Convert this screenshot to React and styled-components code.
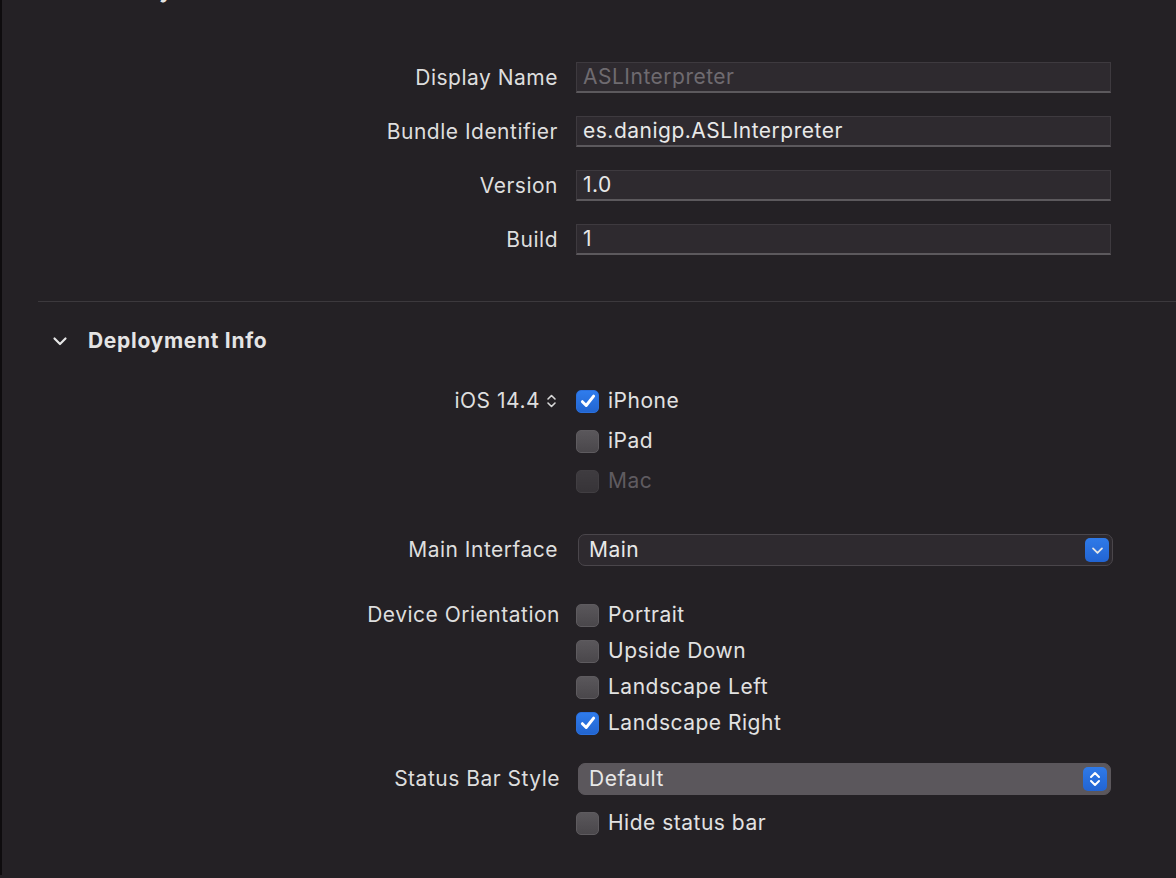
import styled, { createGlobalStyle } from 'styled-components';

const GlobalStyle = createGlobalStyle`
  html, body {
    margin: 0;
    padding: 0;
    background: #242125;
    overflow: hidden;
  }
  body {
    font-family: Inter, "Noto Sans", "Liberation Sans", sans-serif;
    -webkit-font-smoothing: antialiased;
  }
`;

function Chevron({ size = 16 }) {
  return (
    <svg width={size} height={size} viewBox="0 0 16 16" fill="none">
      <path d="M2.5 5.5 L8 11 L13.5 5.5" stroke="#e6e6e6" strokeWidth="2.2" strokeLinecap="round" strokeLinejoin="round" />
    </svg>
  );
}

function Check() {
  return (
    <svg width="18" height="18" viewBox="0 0 16 16" fill="none">
      <path d="M3 8.6 L6.4 12 L13 3.6" stroke="#fff" strokeWidth="2.6" strokeLinecap="round" strokeLinejoin="round" />
    </svg>
  );
}

function Stepper() {
  return (
    <svg width="11" height="16" viewBox="0 0 11 16" fill="none">
      <path d="M2 6 L5.5 2.5 L9 6" stroke="#d8d8d8" strokeWidth="1.6" strokeLinecap="round" strokeLinejoin="round" />
      <path d="M2 10 L5.5 13.5 L9 10" stroke="#d8d8d8" strokeWidth="1.6" strokeLinecap="round" strokeLinejoin="round" />
    </svg>
  );
}

function UpDown() {
  return (
    <svg width="14" height="18" viewBox="0 0 14 18" fill="none">
      <path d="M3 7 L7 3 L11 7" stroke="#fff" strokeWidth="2" strokeLinecap="round" strokeLinejoin="round" />
      <path d="M3 11 L7 15 L11 11" stroke="#fff" strokeWidth="2" strokeLinecap="round" strokeLinejoin="round" />
    </svg>
  );
}

function CheckRow({ label, checked, disabled }) {
  return (
    <CheckLine>
      <Box $checked={checked} $disabled={disabled}>{checked && <Check />}</Box>
      <CheckText $disabled={disabled}>{label}</CheckText>
    </CheckLine>
  );
}

const identity = [
  { label: 'Display Name', value: 'ASLInterpreter', muted: true },
  { label: 'Bundle Identifier', value: 'es.danigp.ASLInterpreter' },
  { label: 'Version', value: '1.0' },
  { label: 'Build', value: '1' },
];

export default function App() {
  return (
    <Page>
      <GlobalStyle />
      <SectionHeader $top={-29}>
        <Chevron />
        <HeaderText>Identity</HeaderText>
      </SectionHeader>

      <FieldList>
        {identity.map((f) => (
          <Row key={f.label}>
            <Label>{f.label}</Label>
            <TextField $muted={f.muted}>{f.value}</TextField>
          </Row>
        ))}
      </FieldList>

      <Divider />

      <SectionHeader $top={19}>
        <Chevron />
        <HeaderText>Deployment Info</HeaderText>
      </SectionHeader>

      <Group $top={28} $gap={16}>
        <Row>
          <Label $shift={-1}>
            iOS 14.4 <Stepper />
          </Label>
          <CheckRow label="iPhone" checked />
        </Row>
        <Row>
          <Label />
          <CheckRow label="iPad" />
        </Row>
        <Row>
          <Label />
          <CheckRow label="Mac" disabled />
        </Row>
      </Group>

      <Group $top={41}>
        <Row>
          <Label>Main Interface</Label>
          <Popup>
            <span>Main</span>
            <PopupButton>
              <Chevron size={13} />
            </PopupButton>
          </Popup>
        </Row>
      </Group>

      <Group $top={37} $gap={12}>
        <Row>
          <Label $shift={2}>Device Orientation</Label>
          <CheckRow label="Portrait" />
        </Row>
        <Row>
          <Label />
          <CheckRow label="Upside Down" />
        </Row>
        <Row>
          <Label />
          <CheckRow label="Landscape Left" />
        </Row>
        <Row>
          <Label />
          <CheckRow label="Landscape Right" checked />
        </Row>
      </Group>

      <Group $top={28}>
        <Row>
          <Label $shift={2}>Status Bar Style</Label>
          <Popup $filled $width={533}>
            <span>Default</span>
            <PopupButton $filled>
              <UpDown />
            </PopupButton>
          </Popup>
        </Row>
      </Group>

      <Group $top={16}>
        <Row>
          <Label />
          <CheckRow label="Hide status bar" />
        </Row>
      </Group>
    </Page>
  );
}

const Page = styled.div`
  min-height: 100vh;
  box-sizing: border-box;
  border-left: 2px solid #0e0c0e;
  background: #242125;
  color: #e2e2e2;
  font-size: 21px;
  line-height: 24px;
  letter-spacing: 0.5px;
  padding-bottom: 40px;
`;

const SectionHeader = styled.div`
  height: 40px;
  margin-top: ${(p) => p.$top}px;
  display: flex;
  align-items: center;
  gap: 20px;
  padding-left: 50px;
`;

const HeaderText = styled.span`
  font-weight: 700;
  font-size: 21px;
  color: #e4e4e4;
  letter-spacing: 0.7px;
`;

const FieldList = styled.div`
  margin-top: 51px;
  display: flex;
  flex-direction: column;
  gap: 23px;
`;

const Group = styled.div`
  margin-top: ${(p) => p.$top}px;
  display: flex;
  flex-direction: column;
  gap: ${(p) => p.$gap || 0}px;
`;

const Row = styled.div`
  display: flex;
  align-items: center;
`;

const Label = styled.div`
  width: 574px;
  flex: none;
  box-sizing: border-box;
  padding-right: ${(p) => 18 - (p.$shift || 0)}px;
  text-align: right;
  color: #dedede;
  display: flex;
  justify-content: flex-end;
  align-items: center;
  gap: 6px;
  white-space: nowrap;
`;

const TextField = styled.div`
  width: 535px;
  height: 31px;
  box-sizing: border-box;
  background: #2e2a2f;
  border: 1px solid #3e3a3f;
  border-bottom: 2px solid #5c595d;
  padding: 0 6px;
  display: flex;
  align-items: center;
  color: ${(p) => (p.$muted ? '#6f6b70' : '#e8e8e8')};
`;

const CheckLine = styled.div`
  display: flex;
  align-items: center;
  gap: 9px;
  height: 24px;
`;

const Box = styled.div`
  width: 23px;
  height: 23px;
  box-sizing: border-box;
  border-radius: 5px;
  display: flex;
  align-items: center;
  justify-content: center;
  background: ${(p) =>
    p.$checked
      ? 'linear-gradient(#2f7cec, #2265d0)'
      : 'linear-gradient(#5a575b, #4a474b)'};
  border: 1px solid ${(p) => (p.$checked ? '#2a6fdc' : '#5e5b5f')};
  opacity: ${(p) => (p.$disabled ? 0.5 : 1)};
`;

const CheckText = styled.span`
  color: ${(p) => (p.$disabled ? '#5f5b60' : '#e2e2e2')};
`;

const Popup = styled.div`
  margin-left: 2px;
  width: ${(p) => p.$width || 535}px;
  height: 32px;
  box-sizing: border-box;
  border-radius: 7px;
  background: ${(p) => (p.$filled ? '#5b575c' : '#2e2a2f')};
  border: 1px solid ${(p) => (p.$filled ? '#5b575c' : '#4a464b')};
  display: flex;
  align-items: center;
  justify-content: space-between;
  padding: 0 3px 0 10px;
  color: #e8e8e8;
`;

const PopupButton = styled.div`
  width: 24px;
  height: 24px;
  border-radius: 5px;
  background: linear-gradient(#2f7ae8, #2264d2);
  display: flex;
  align-items: center;
  justify-content: center;
`;

const Divider = styled.div`
  margin-top: 46px;
  margin-left: 36px;
  height: 1px;
  background: #3c393d;
`;
